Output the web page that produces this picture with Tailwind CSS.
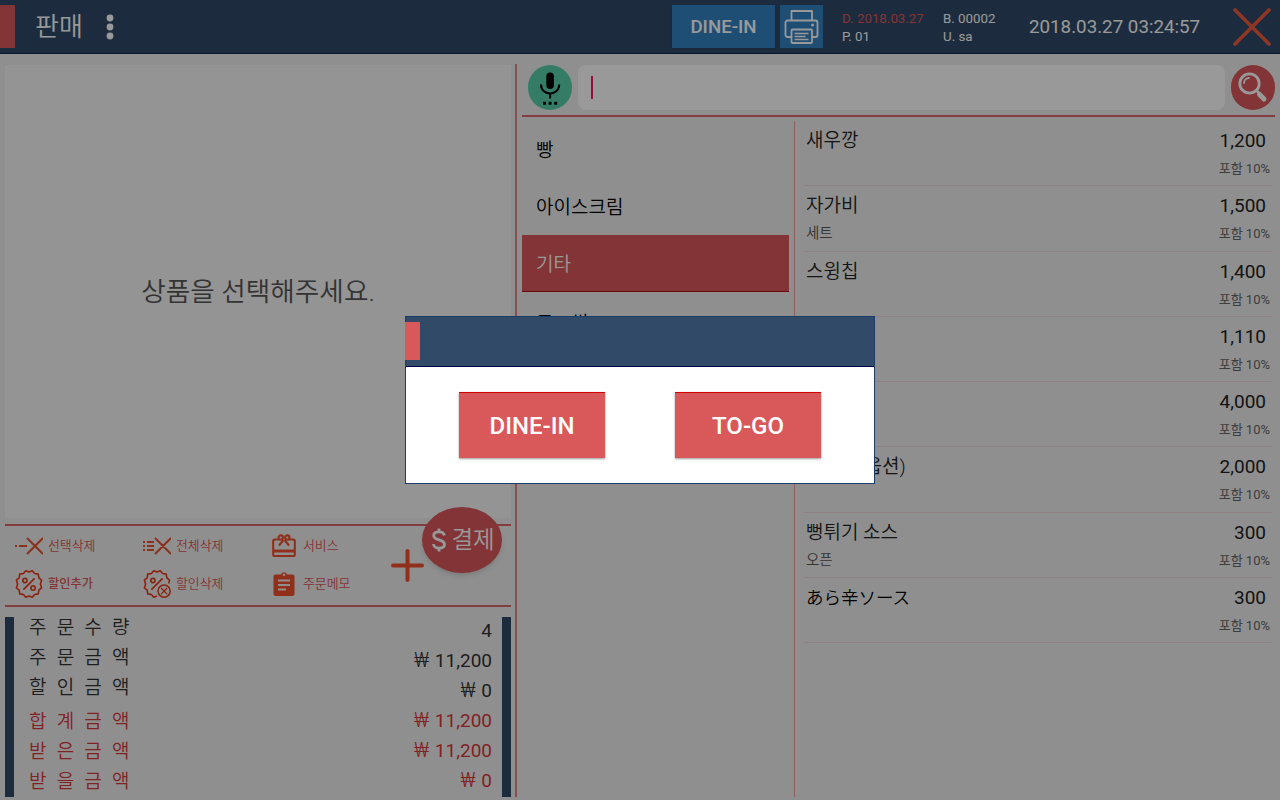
<!DOCTYPE html>
<html lang="ko">

<head>
	<meta charset="UTF-8">
	<meta name="viewport" content="width=device-width, initial-scale=1.0">
	<title>판매</title>
	<script src="https://cdn.jsdelivr.net/npm/@tailwindcss/browser@4"></script>
</head>

<body class="relative w-[1280px] h-[800px] overflow-hidden bg-[#efefef] flex flex-col font-['Roboto','Noto_Sans_CJK_KR',sans-serif] text-[#333]">
	<!-- HEADER -->
	<header class="h-[54px] shrink-0 bg-[#304a68] border-b border-[#0c2745] flex items-center text-white">
		<div class="w-[15px] h-[43px] bg-[#d9585a]"></div>
		<h1 class="ml-5 w-[49px] text-[26px] leading-8 font-[350] whitespace-nowrap">판매</h1>
		<svg class="ml-[22px] w-2 h-[26px]" viewBox="0 0 8 26" fill="#fff">
			<circle cx="4" cy="4" r="3.4" />
			<circle cx="4" cy="13" r="3.4" />
			<circle cx="4" cy="22" r="3.4" />
		</svg>
		<button class="ml-[558px] w-[103px] h-[43px] bg-[#3482c2] text-[18.67px] font-medium shadow-sm">DINE-IN</button>
		<button class="ml-[5px] w-[43px] h-[43px] bg-[#3482c2] flex items-center justify-center">
			<svg class="w-[35px] h-[36px]" viewBox="0 0 35 36" fill="none" stroke="#fff" stroke-width="1.8" stroke-linejoin="round">
				<path d="M7.5 11.5V2H28v9.5M7 28H3.5a2 2 0 0 1-2-2V13.5a2 2 0 0 1 2-2h28a2 2 0 0 1 2 2V26a2 2 0 0 1-2 2H28" />
				<rect x="7.5" y="20.5" width="20.5" height="13.5" rx="1" />
				<path d="M10.5 24.5h14M10.5 27.5h11M10.5 30.5h14" stroke-width="1.4" />
				<circle cx="28.5" cy="16" r="1.5" fill="#fff" stroke="none" />
			</svg>
		</button>
		<div class="ml-[19px] pt-[2px] w-[101px] text-[13.33px] leading-[18px]">
			<p class="text-[#d9585a]">D. 2018.03.27</p>
			<p>P. 01</p>
		</div>
		<div class="pt-[2px] w-[86px] text-[13.33px] leading-[18px]">
			<p>B. 00002</p>
			<p>U. sa</p>
		</div>
		<p class="pt-[2px] w-[204px] text-[18.75px]">2018.03.27 03:24:57</p>
		<svg class="w-[38px] h-[38px]" viewBox="0 0 38 38" stroke="#f05a3c" stroke-width="3.6" stroke-linecap="round">
			<path d="M2 2l34 34M36 2L2 36" />
		</svg>
	</header>

	<main class="flex-1 min-h-0 flex pb-[3px]">
		<!-- ORDER -->
		<section class="w-[511px] pl-[5px] pt-[11px] flex flex-col">
			<div class="h-[453px] bg-[#f7f7f7] flex items-center justify-center text-[26.67px] font-[350] text-[#555]">
				<p class="leading-8">상품을 선택해주세요.</p>
			</div>

			<div class="relative mt-[6px] h-[83px] border-y-2 border-[#d9686a] text-[#d9585a]">
				<div class="pl-[10px] pt-px grid grid-cols-[128px_129px_110px] grid-rows-[38px_38px] items-center text-[12.9px] font-[350]">
					<div class="flex items-center gap-[5px]">
						<svg class="w-7 h-[18px]" viewBox="0 0 28 18" stroke="#e8502e" stroke-width="2" fill="none">
							<path d="M0 9h2M4 9h8M12 1l16 16M28 1L12 17" />
						</svg>
						<span>선택삭제</span>
					</div>
					<div class="flex items-center gap-[5px]">
						<svg class="w-7 h-[18px]" viewBox="0 0 28 18" stroke="#e8502e" stroke-width="2" fill="none">
							<path d="M0 5h2M4 5h7M0 9h2M4 9h7M0 13h2M4 13h7M12 1l16 16M28 1L12 17" />
						</svg>
						<span>전체삭제</span>
					</div>
					<div class="flex items-center gap-[7px]">
						<svg class="w-[24px] h-[24px]" viewBox="0 0 24 24" fill="none" stroke="#f0502e" stroke-width="2.1">
							<path d="M6.5 5.5H2.7A1.5 1.5 0 0 0 1.2 7v13.5a1.500 1.500 0 0 0 1.500 1.500h18.600a1.500 1.500 0 0 0 1.500-1.500V7a1.500 1.500 0 0 0-1.500-1.500h-3.800" />
							<path d="M1 17h22" stroke-width="3" />
							<circle cx="8.7" cy="3.6" r="2.2" />
							<circle cx="15.3" cy="3.6" r="2.2" />
							<path d="M11.5 6L7 11.5M12.5 6l4.5 5.5" />
						</svg>
						<span>서비스</span>
					</div>
					<div class="flex items-center gap-[5px]">
						<svg class="w-7 h-7" viewBox="0.7 0.2 26.6 27.6" fill="none" stroke="#e83a18" stroke-width="1.6" stroke-linejoin="round">
							<path d="M14 2.2L17.2 1l2.3 2.700 3.600.600.600 3.600 2.700 2.300L25.200 14l1.200 3.800-2.700 2.300-.600 3.600-3.600.600-2.300 2.700L14 25.800 10.800 27l-2.300-2.700-3.600-.600-.600-3.600-2.700-2.300L2.800 14 1.600 10.200l2.700-2.300.600-3.600 3.600-.600L10.800 1z" />
							<path d="M19.5 8.5l-11 11" />
							<circle cx="10" cy="10.5" r="2.1" />
							<circle cx="18" cy="18" r="2.1" />
						</svg>
						<span class="text-[12.2px] font-medium">할인추가</span>
					</div>
					<div class="flex items-center gap-[5px]">
						<svg class="w-7 h-7" viewBox="0.7 0.2 26.6 27.6" fill="none" stroke="#e83a18" stroke-width="1.6" stroke-linejoin="round">
							<path d="M14 25.800L10.800 27l-2.300-2.700-3.600-.600-.600-3.600-2.700-2.300L2.800 14 1.600 10.200l2.700-2.300.600-3.600 3.600-.600L10.800 1 14 2.200 17.200 1l2.300 2.700 3.600.600.600 3.600 2.700 2.300-.900 3.300" />
							<path d="M19.5 8.5l-11 11" />
							<circle cx="10" cy="10.5" r="2.1" />
							<circle cx="21" cy="21" r="6" stroke-width="1.5" />
							<path d="M18 18l6 6M24 18l-6 6" stroke-width="1.3" />
						</svg>
						<span>할인삭제</span>
					</div>
					<div class="flex items-center gap-[7px]">
						<svg class="w-6 h-6" viewBox="0 0 24 24">
							<path fill="#f0502e" d="M3.5 2.500H9a3.100 3.100 0 0 1 6 0h5.500a2 2 0 0 1 2 2V22a2 2 0 0 1-2 2h-17a2 2 0 0 1-2-2V4.500a2 2 0 0 1 2-2z" />
							<circle cx="12" cy="2.8" r="1.2" fill="#efefef" />
							<path d="M6 8.5h12M6 13h12M6 17.5h8" stroke="#efefef" stroke-width="2" />
						</svg>
						<span>주문메모</span>
					</div>
				</div>
				<svg class="absolute left-[386px] top-[23px] w-[33px] h-[33px]" viewBox="0 0 33 33" stroke="#f0502e" stroke-width="4" stroke-linecap="round">
					<path d="M16.5 2v29M2 16.5h29" />
				</svg>
				<button class="absolute left-[417px] top-[-19px] w-[80px] h-[66px] pl-[3px] rounded-[50%] bg-[#d9585a] shadow-md flex items-center justify-center gap-[5px] text-white text-[23.5px] font-[350]">
					<svg class="w-[14px] h-[24px]" viewBox="0 0 14 24" fill="none" stroke="#fff" stroke-width="2.8">
						<path d="M12.300 7.500C12 5 10 3.800 7 3.800S1.700 5 1.700 7.500 4 11 7 11.800s5.500 1.700 5.500 4.500S10 20.200 7 20.200 1.500 18.800 1.500 16M7 .5V4M7 20v3.500" />
					</svg>
					<span class="leading-8">결제</span>
				</button>
			</div>

			<div class="mt-[10px] h-[180px] border-x-[9px] border-[#304a68] flex justify-between pl-[15px] pr-[10px] text-[19px]">
				<div class="font-[350] tracking-[10.2px] leading-[30px] mt-[-4px]">
					<p>주문수량</p>
					<p>주문금액</p>
					<p class="mb-1">할인금액</p>
					<p class="text-[#d9383a]">합계금액</p>
					<p class="text-[#d9383a]">받은금액</p>
					<p class="text-[#d9383a]">받을금액</p>
				</div>
				<div class="text-right leading-[30px] mt-[-1px]">
					<p class="h-[30px]">4</p>
					<p class="h-[30px]"><span class="mr-px text-[20px] leading-none font-light">₩</span> 11,200</p>
					<p class="h-[30px]"><span class="mr-px text-[20px] leading-none font-light">₩</span> 0</p>
					<p class="h-[30px] text-[#d9383a]"><span class="mr-px text-[20px] leading-none font-light">₩</span> 11,200</p>
					<p class="h-[30px] text-[#d9383a]"><span class="mr-px text-[20px] leading-none font-light">₩</span> 11,200</p>
					<p class="h-[30px] text-[#d9383a]"><span class="mr-px text-[20px] leading-none font-light">₩</span> 0</p>
				</div>
			</div>
		</section>

		<div class="ml-1 mt-[10px] w-[2px] bg-[#e08486]"></div>

		<!-- PRODUCTS -->
		<section class="ml-[5px] w-[753px] pt-[11px] flex flex-col">
			<div class="h-[52px] pl-[6px] flex border-b-2 border-[#d9686a]">
				<div class="w-[44px] h-[45px] rounded-full bg-[#57cfaa]">
					<svg class="w-[44px] h-[45px]" viewBox="0 0 44 45" fill="none" stroke="#000" stroke-width="2">
						<rect x="18.300" y="7.500" width="7.600" height="16.500" rx="3.800" fill="#000" stroke="none" />
						<path d="M13 19.500c0 5.500 4 9 9.100 9s9.100-3.500 9.100-9M22.100 28v5.500" />
						<path d="M15 38.300h3M20.600 38.300h3M26.200 38.300h3" stroke-width="3" />
					</svg>
				</div>
				<div class="ml-[6px] w-[647px] h-[45px] rounded-lg bg-white pl-[13px] flex items-center">
					<div class="w-[2px] h-[23px] bg-[#e91e63]"></div>
				</div>
				<div class="ml-[6px] w-[44px] h-[45px] rounded-full bg-[#d9585a]">
					<svg class="w-[44px] h-[45px]" viewBox="0 0 44 45" fill="none" stroke="#fff" stroke-linecap="round">
						<circle cx="18.5" cy="18.5" r="9.7" stroke-width="2.8" />
						<path d="M13 18a5.500 5.500 0 0 1 5-5.200" stroke-width="1.8" />
						<path d="M25.5 25.5l3 3" stroke-width="2.5" />
						<path d="M28.5 29.5l4.500 4.500" stroke-width="5" />
					</svg>
				</div>
			</div>

			<div class="mt-1 flex-1 min-h-0 flex">
				<ul class="w-[267px] text-[19px] leading-[59px] font-[350] text-black">
					<li class="h-[57px] pl-[14px]">빵</li>
					<li class="h-[57px] pl-[14px]">아이스크림</li>
					<li class="h-[57px] pl-[14px] bg-[#d9585a] border-b border-[#b01010] text-white">기타</li>
					<li class="h-[57px] pl-[14px] pt-[2px] flex gap-[18px]"><span>로</span><span>쌀</span></li>
				</ul>
				<div class="ml-[5px] w-px bg-[#f0a0a2]"></div>
				<ul class="ml-[9px] w-[468px] text-[19px] font-[350] text-[#222]">
					<li class="h-[65.25px] border-b border-[#edd8d8] pl-[2px] flex justify-between">
						<div class="pt-1">
							<p class="leading-8">새우깡</p>
						</div>
						<div class="pt-1 text-right font-normal">
							<p class="pr-[6px] leading-8">1,200</p>
							<p class="pr-[2px] text-[13px] leading-6 text-[#666]">포함 10%</p>
						</div>
					</li>
					<li class="h-[65.25px] border-b border-[#edd8d8] pl-[2px] flex justify-between">
						<div class="pt-1">
							<p class="leading-8">자가비</p>
							<p class="text-[14.5px] leading-6 text-[#555]">세트</p>
						</div>
						<div class="pt-1 text-right font-normal">
							<p class="pr-[6px] leading-8">1,500</p>
							<p class="pr-[2px] text-[13px] leading-6 text-[#666]">포함 10%</p>
						</div>
					</li>
					<li class="h-[65.25px] border-b border-[#edd8d8] pl-[2px] flex justify-between">
						<div class="pt-1">
							<p class="leading-8">스윙칩</p>
						</div>
						<div class="pt-1 text-right font-normal">
							<p class="pr-[6px] leading-8">1,400</p>
							<p class="pr-[2px] text-[13px] leading-6 text-[#666]">포함 10%</p>
						</div>
					</li>
					<li class="h-[65.25px] border-b border-[#edd8d8] pl-[2px] flex justify-end">
						<div class="pt-1 text-right font-normal">
							<p class="pr-[6px] leading-8">1,110</p>
							<p class="pr-[2px] text-[13px] leading-6 text-[#666]">포함 10%</p>
						</div>
					</li>
					<li class="h-[65.25px] border-b border-[#edd8d8] pl-[2px] flex justify-end">
						<div class="pt-1 text-right font-normal">
							<p class="pr-[6px] leading-8">4,000</p>
							<p class="pr-[2px] text-[13px] leading-6 text-[#666]">포함 10%</p>
						</div>
					</li>
					<li class="h-[65.25px] border-b border-[#edd8d8] pl-[2px] flex justify-between">
						<div class="pt-1">
							<p class="leading-8">떡볶이(옵션)</p>
						</div>
						<div class="pt-1 text-right font-normal">
							<p class="pr-[6px] leading-8">2,000</p>
							<p class="pr-[2px] text-[13px] leading-6 text-[#666]">포함 10%</p>
						</div>
					</li>
					<li class="h-[65.25px] border-b border-[#edd8d8] pl-[2px] flex justify-between">
						<div class="pt-1">
							<p class="leading-8">뻥튀기 소스</p>
							<p class="text-[14.5px] leading-6 text-[#555]">오픈</p>
						</div>
						<div class="pt-1 text-right font-normal">
							<p class="pr-[6px] leading-8">300</p>
							<p class="pr-[2px] text-[13px] leading-6 text-[#666]">포함 10%</p>
						</div>
					</li>
					<li class="h-[65.25px] border-b border-[#edd8d8] pl-[2px] flex justify-between">
						<div class="pt-1">
							<p class="leading-8 text-[17.5px] text-black">あら辛ソース</p>
						</div>
						<div class="pt-1 text-right font-normal">
							<p class="pr-[6px] leading-8">300</p>
							<p class="pr-[2px] text-[13px] leading-6 text-[#666]">포함 10%</p>
						</div>
					</li>
				</ul>
			</div>
		</section>
	</main>

	<!-- DIALOG -->
	<div class="absolute inset-0 bg-black/40 flex items-center justify-center">
		<div class="w-[470px] h-[168px] bg-white border border-[#1c3c6c] flex flex-col">
			<div class="h-[50px] bg-[#304a68] border-b border-[#00004a]">
				<div class="ml-[-1px] mt-[5px] w-[15px] h-[38px] bg-[#d9585a]"></div>
			</div>
			<div class="pt-[25px] flex justify-center gap-[70px] text-white text-2xl font-medium">
				<button class="w-[146px] h-[66px] bg-[#d9585a] border-t border-[#d00000] shadow-[0_1px_2px_rgba(0,0,0,0.4)]">DINE-IN</button>
				<button class="w-[146px] h-[66px] bg-[#d9585a] border-t border-[#d00000] shadow-[0_1px_2px_rgba(0,0,0,0.4)]">TO-GO</button>
			</div>
		</div>
	</div>
</body>

</html>
